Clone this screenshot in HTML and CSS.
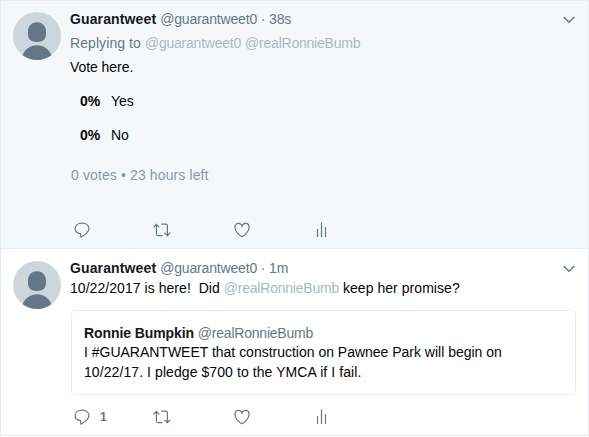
FILE: index.html
```html
<!DOCTYPE html>
<html lang="en">
<head>
<meta charset="utf-8">
<title>Guarantweet</title>
<link rel="stylesheet" href="styles.css">
</head>
<body>
<svg class="sprite" aria-hidden="true">
  <symbol id="person" viewBox="0 0 48 48">
    <circle cx="24" cy="24" r="24" fill="#ccd6dd"/>
    <path d="M24 10.300c-6.200 0-9.200 4.600-9.100 10.300.1 6.200 1.800 9.400 9.100 9.400s9-3.200 9.100-9.400c.1-5.700-2.900-10.300-9.100-10.300zM9.600 43.200C12.200 37 17.500 33.200 24 33.200s11.800 3.800 14.400 10A24 24 0 0 1 9.600 43.200z" fill="#657786"/>
  </symbol>
  <symbol id="reply" viewBox="0 0 16 16">
    <path d="M6.400 11.700C3.200 11.300 1.100 9.300 1.100 6.500 1.100 3.400 3.900 1.200 8 1.200s6.900 2.200 6.900 5.300c0 3.800-4 6.500-7.900 8.600-.3-.9-.2-1.900-.6-3.400z"/>
  </symbol>
  <symbol id="retweet" viewBox="0 0 20 16">
    <path d="M1.500 5.400 4.400 2.300l2.900 3.100M4.400 2.500v9.600c0 1 .5 1.500 1.500 1.500h4.400M9.200 2.200h4.700c1 0 1.500.5 1.500 1.500v9.700M12.500 10.600l2.900 3.100 2.900-3.100"/>
  </symbol>
  <symbol id="heart" viewBox="0 0 16 16">
    <path d="M8 14.700C5.300 13.500.9 9.400.9 5.300c0-2.300 1.500-4 3.500-4C6 1.300 7.400 2.300 8 4c.6-1.700 2-2.700 3.600-2.700 2 0 3.500 1.700 3.500 4 0 4.100-4.400 8.200-7.100 9.400z"/>
  </symbol>
  <symbol id="stats" viewBox="0 0 12 16">
    <path d="M1.500 7v8M5.500.5V15M9.500 5v10"/>
  </symbol>
  <symbol id="chevron" viewBox="0 0 12 8">
    <path d="M.7 1 6 6.300 11.300 1"/>
  </symbol>
</svg>
<main class="stream">
  <article class="tweet tweet-active">
    <svg class="avatar"><use href="#person"/></svg>
    <div class="content">
      <header class="head"><span class="line byline"><b class="name">Guarantweet</b> <span class="handle">@guarantweet0 · 38s</span></span><svg class="icon chevron"><use href="#chevron"/></svg></header>
      <p class="line reply-to">Replying to <a>@guarantweet0</a> <a>@realRonnieBumb</a></p>
      <p class="line vote-text">Vote here.</p>
      <div class="poll">
        <div class="choice"><b>0%</b><span>Yes</span></div>
        <div class="choice"><b>0%</b><span>No</span></div>
      </div>
      <p class="line votes">0 votes • 23 hours left</p>
      <footer class="actions">
        <span class="action"><svg class="icon reply"><use href="#reply"/></svg></span>
        <span class="action"><svg class="icon retweet"><use href="#retweet"/></svg></span>
        <span class="action"><svg class="icon heart"><use href="#heart"/></svg></span>
        <span class="action"><svg class="icon stats"><use href="#stats"/></svg></span>
      </footer>
    </div>
  </article>
  <article class="tweet">
    <svg class="avatar"><use href="#person"/></svg>
    <div class="content">
      <header class="head"><span class="line byline"><b class="name">Guarantweet</b> <span class="handle">@guarantweet0 · 1m</span></span><svg class="icon chevron"><use href="#chevron"/></svg></header>
      <p class="line body-text">10/22/2017 is here!&nbsp; Did <a>@realRonnieBumb</a> keep her promise?</p>
      <section class="quote">
        <div class="line quote-byline"><b class="name">Ronnie Bumpkin</b> <span class="handle">@realRonnieBumb</span></div>
        <p class="quote-text">I #GUARANTWEET that construction on Pawnee Park will begin on</p>
        <p class="quote-text quote-end">10/22/17. I pledge $700 to the YMCA if I fail.</p>
      </section>
      <footer class="actions">
        <span class="action"><svg class="icon reply"><use href="#reply"/></svg><b class="count">1</b></span>
        <span class="action"><svg class="icon retweet"><use href="#retweet"/></svg></span>
        <span class="action"><svg class="icon heart"><use href="#heart"/></svg></span>
        <span class="action"><svg class="icon stats"><use href="#stats"/></svg></span>
      </footer>
    </div>
  </article>
</main>
</body>
</html>
```
FILE: styles.css
```css
* { box-sizing: border-box; }
body {
  margin: 0;
  background: #fff;
  color: #050607;
  font: 14px/20px "Liberation Sans", Arial, sans-serif;
}
p { margin: 0; }
.sprite { display: none; }
.stream {
  height: 436px;
  border: 1px solid #e6ecf0;
}
.tweet {
  display: flex;
  padding: 9px 12px 0;
  height: 186px;
}
.tweet-active {
  height: 248px;
  padding-top: 8px;
  background: #f5f8fa;
  border-bottom: 1px solid #e6ecf0;
}
.avatar {
  flex: none;
  width: 48px;
  height: 48px;
  margin: 3px 9px 0 0;
}
.content { flex: 1; min-width: 0; }
.line { white-space: nowrap; }
.head { display: flex; justify-content: space-between; }
.name { color: #14171a; }
.byline .name { letter-spacing: 0.13px; }
.handle, .reply-to { color: #657786; }
.handle { letter-spacing: -0.16px; }
a { color: #aab8c2; letter-spacing: -0.22px; }
.icon {
  display: block;
  flex: none;
  fill: none;
  stroke: #657786;
  stroke-width: 1.2;
}
.chevron { width: 12px; height: 8px; margin: 7px 1.500px 0 0; stroke-width: 1.5; }
.reply-to { margin-top: 4px; letter-spacing: 0.08px; }
.vote-text { margin-top: 4px; letter-spacing: -0.06px; }
.poll { padding: 14px 0 0 10px; }
.choice { display: flex; height: 34px; }
.choice b { width: 31px; }
.votes { color: #8899a6; margin: 6px 0 0 1px; letter-spacing: 0.12px; }
.body-text { letter-spacing: 0.05px; }
.actions { display: flex; margin: 36px 0 0 4px; height: 18px; }
.action { display: flex; align-items: center; width: 80px; }
.reply, .heart { width: 16px; height: 16px; }
.retweet { width: 20px; height: 16px; margin-left: -2px; }
.stats { width: 12px; height: 16px; margin-left: 2px; }
.count { margin-left: 10px; color: #657786; font-size: 12px; }
.quote {
  width: 505px;
  height: 85px;
  margin: 12px 0 0 1px;
  padding: 12px;
  border: 1px solid #e6ecf0;
  border-radius: 4px;
}
.quote-byline .name { letter-spacing: -0.09px; }
.quote-byline .handle { letter-spacing: -0.22px; }
.quote-text { line-height: 19.500px; white-space: nowrap; letter-spacing: -0.01px; }
.quote-end { letter-spacing: 0.08px; }
.quote + .actions { margin-top: 13px; }
```
